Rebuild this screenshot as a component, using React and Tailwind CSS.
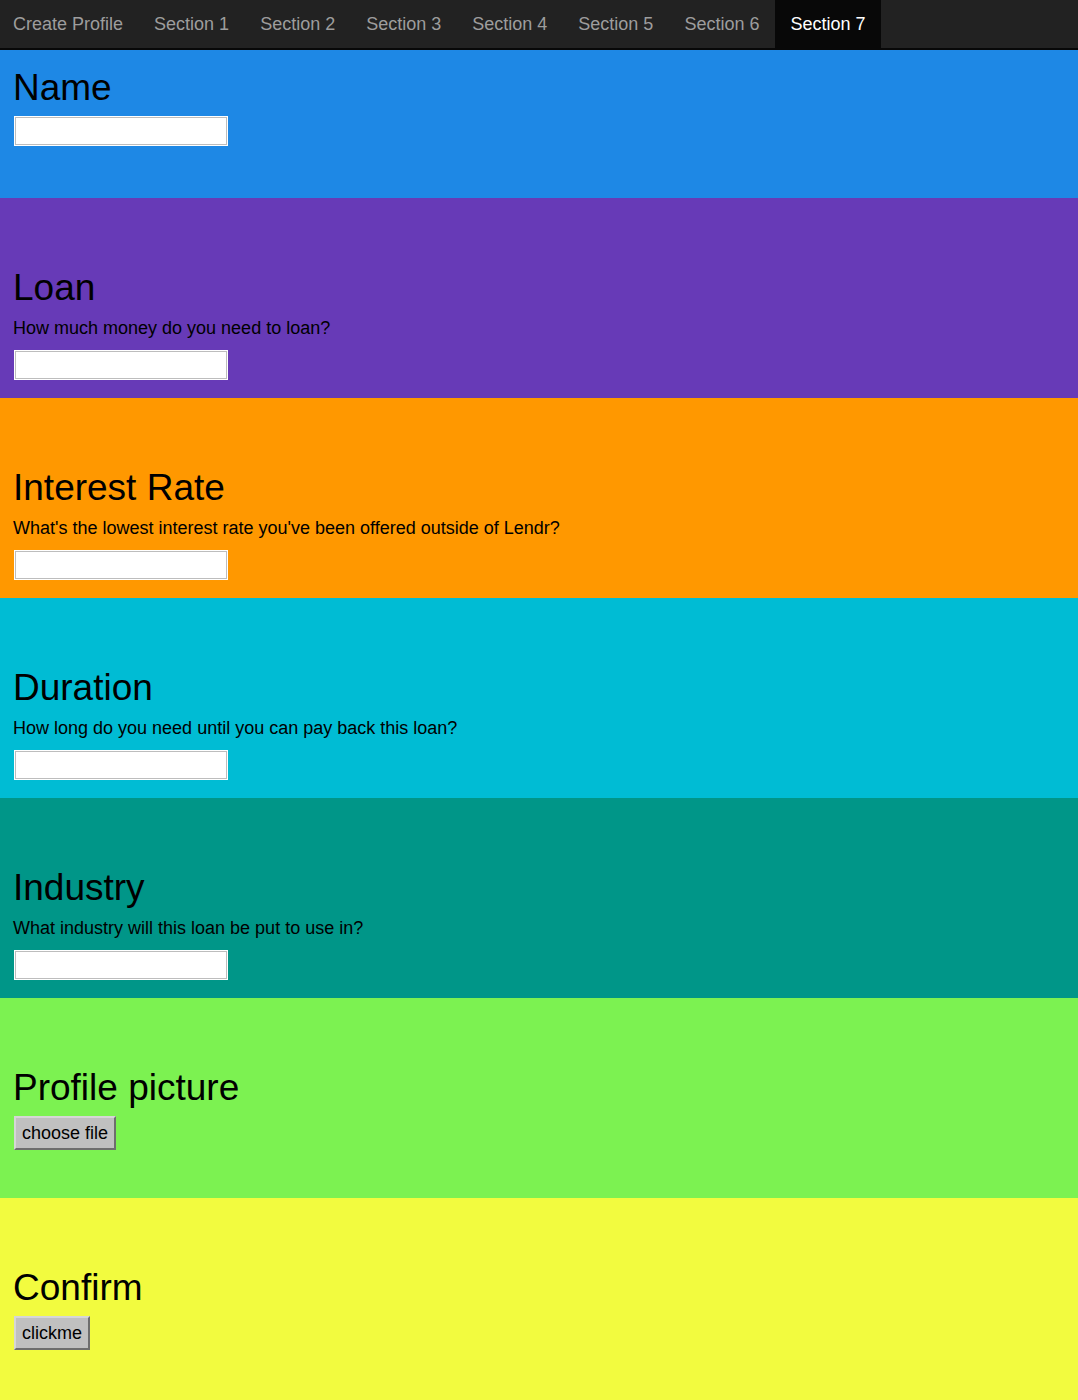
import React from 'react';

const navItems = ['Section 1', 'Section 2', 'Section 3', 'Section 4', 'Section 5', 'Section 6', 'Section 7'];

const sections = [
  { title: 'Loan', text: 'How much money do you need to loan?', bg: 'bg-[#673ab7]' },
  { title: 'Interest Rate', text: "What's the lowest interest rate you've been offered outside of Lendr?", bg: 'bg-[#ff9800]' },
  { title: 'Duration', text: 'How long do you need until you can pay back this loan?', bg: 'bg-[#00bcd4]' },
  { title: 'Industry', text: 'What industry will this loan be put to use in?', bg: 'bg-[#009688]' },
];

function TextBox({ className = '' }) {
  return (
    <input
      type="text"
      className={`block ml-[2px] w-[212px] h-[28px] bg-white border border-[#bdbdbd] outline outline-white ${className}`}
    />
  );
}

function GrayButton({ label }) {
  return (
    <button className="block ml-px h-[34px] px-[6px] bg-[#c0c0c0] text-black text-[18px] leading-[22px] border-2 border-t-[#d6d6d6] border-l-[#d6d6d6] border-b-[#6e6e6e] border-r-[#6e6e6e]">
      {label}
    </button>
  );
}

export default function App() {
  return (
    <div className="w-[1078px] min-h-[1400px] bg-[#f2fb3f] font-['Liberation_Sans',Arial,sans-serif] text-black">
      {/* Navbar */}
      <nav className="flex h-[50px] bg-[#222222] border-b-2 border-[#080808]">
        <span className="pl-[13px] pr-[15px] leading-[48px] text-[18px] text-[#9d9d9d]">Create Profile</span>
        {navItems.map((item, i) => (
          <span
            key={item}
            className={
              i === navItems.length - 1
                ? 'ml-px px-[15px] leading-[48px] text-[18px] text-white bg-[#080808]'
                : 'ml-px px-[15px] leading-[48px] text-[18px] text-[#9d9d9d]'
            }
          >
            {item}
          </span>
        ))}
      </nav>

      {/* Name */}
      <section className="h-[148px] bg-[#1e88e5] px-[13px] pt-[18px]">
        <h1 className="text-[37px] leading-[40px]">Name</h1>
        <TextBox className="mt-[9px]" />
      </section>

      {sections.map((s) => (
        <section key={s.title} className={`h-[200px] ${s.bg} px-[13px] pt-[70px]`}>
          <h1 className="text-[37px] leading-[40px]">{s.title}</h1>
          <p className="mt-[10px] text-[18px] leading-[20px]">{s.text}</p>
          <TextBox className="mt-[13px]" />
        </section>
      ))}

      {/* Profile picture */}
      <section className="h-[200px] bg-[#7cf251] px-[13px] pt-[70px]">
        <h1 className="text-[37px] leading-[40px]">Profile picture</h1>
        <div className="mt-[8px]">
          <GrayButton label="choose file" />
        </div>
      </section>

      {/* Confirm */}
      <section className="h-[202px] bg-[#f2fb3f] px-[13px] pt-[70px]">
        <h1 className="text-[37px] leading-[40px]">Confirm</h1>
        <div className="mt-[8px]">
          <GrayButton label="clickme" />
        </div>
      </section>
    </div>
  );
}
